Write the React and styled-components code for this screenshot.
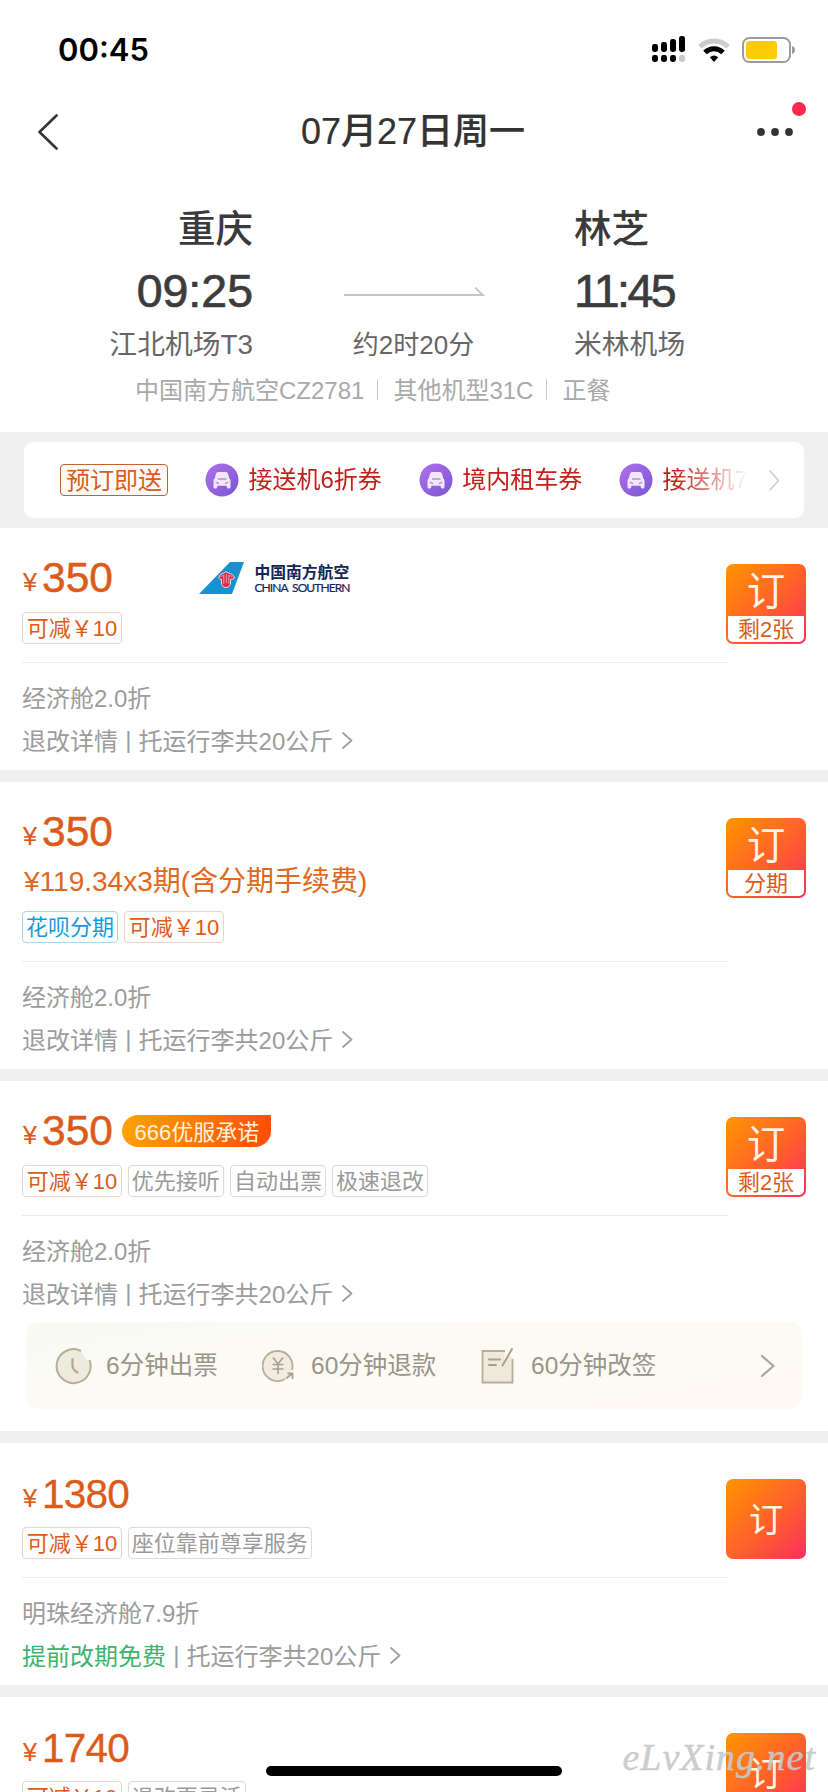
import React from 'react';
import styled, { createGlobalStyle, css } from 'styled-components';

const GlobalStyle = createGlobalStyle`
  * { box-sizing: border-box; }
  body {
    margin: 0;
    background: #fff;
    font-family: "Liberation Sans", "Noto Sans CJK SC", sans-serif;
  }
`;

const orange = '#dc5b1a';

const Screen = styled.div`
  position: relative;
  width: 828px;
  height: 1792px;
  overflow: hidden;
  background: #fff;
  display: flex;
  flex-direction: column;
`;

/* ---------- status bar and title ---------- */
const StatusBar = styled.div`
  flex: none;
  height: 98px;
  padding: 1px 32px 0 57px;
  display: flex;
  align-items: center;
  justify-content: space-between;
`;
const Clock = styled.span`
  font-family: Inter, sans-serif;
  font-weight: 600;
  font-size: 31px;
  line-height: 40px;
  color: #000;
  padding: 1px 0 0 1px;
`;
const StatusIcons = styled.div`
  display: flex;
  gap: 12px;
  align-items: center;
  svg { display: block; }
`;
const NavBar = styled.header`
  flex: none;
  height: 68px;
  padding: 0 33px 0 38px;
  display: grid;
  grid-template-columns: 60px 1fr 60px;
  align-items: center;
  svg { display: block; }
`;
const Title = styled.h1`
  margin: 0;
  padding-right: 7px;
  text-align: center;
  font-size: 36px;
  font-weight: 500;
  line-height: 50px;
  color: #333;
  -webkit-text-stroke: 0.2px;
`;
const MoreButton = styled.div`
  position: relative;
  justify-self: end;
`;
const Dot = styled.i`
  position: absolute;
  right: -11px;
  top: -26px;
  width: 14px;
  height: 14px;
  border-radius: 50%;
  background: #fb2a4e;
`;

/* ---------- flight summary ---------- */
const Summary = styled.section`
  flex: none;
  height: 266px;
  padding-top: 38px;
`;
const Legs = styled.div`
  display: grid;
  grid-template-columns: 253px 321px 254px;
`;
const Leg = styled.div`
  text-align: ${(p) => p.$align};
`;
const City = styled.div`
  font-size: 37.5px;
  font-weight: 500;
  line-height: 50px;
  color: #3a3a3a;
`;
const Time = styled.div`
  font-size: 46.5px;
  line-height: 60px;
  margin-top: 7px;
  color: #3c3c3c;
  letter-spacing: ${(p) => p.$spacing || '0'};
  -webkit-text-stroke: 0.7px;
`;
const Airport = styled.div`
  font-size: 27.8px;
  line-height: 40px;
  margin-top: 4px;
  color: #666;
`;
const Duration = styled.div`
  display: flex;
  flex-direction: column;
  align-items: center;
  padding-top: 83px;
  font-size: 26px;
  line-height: 40px;
  color: #666;
  svg { display: block; margin-bottom: 28px; }
`;
const FlightInfo = styled.div`
  display: flex;
  align-items: center;
  margin: 4px 0 0 135px;
  font-size: 24px;
  line-height: 44px;
  color: #a9a9a9;
  span + span {
    display: flex;
    align-items: center;
  }
  span + span::before {
    content: '';
    width: 1px;
    height: 21px;
    margin: -4px 15px 0 13px;
    background: #ccc;
  }
`;

/* ---------- promotions ---------- */
const PromoBand = styled.section`
  flex: none;
  height: 96px;
  padding: 10px 24px;
  background: #f0f0f0;
`;
const PromoCard = styled.div`
  height: 76px;
  padding: 0 24px 0 36px;
  border-radius: 9px;
  background: #fff;
  display: flex;
  align-items: center;
  justify-content: space-between;
  svg { display: block; flex: none; }
`;
const PromoScroller = styled.div`
  width: 690px;
  overflow: hidden;
  display: flex;
  align-items: center;
  white-space: nowrap;
  mask-image: linear-gradient(90deg, #000 615px, transparent 688px);
`;
const PromoTag = styled.span`
  flex: none;
  width: 108px;
  height: 32px;
  margin-right: 37px;
  border: 1px solid #bd6430;
  border-radius: 4px;
  background: #fffbf8;
  text-align: center;
  font-size: 24px;
  line-height: 32px;
  color: ${orange};
`;
const Coupon = styled.span`
  flex: none;
  display: flex;
  align-items: center;
  gap: 9.5px;
  margin-right: 36.8px;
  font-size: 24px;
  line-height: 34px;
  color: #c4201a;
`;

/* ---------- fare cards ---------- */
const Fare = styled.article`
  flex: none;
  height: ${(p) => p.$height}px;
  padding: 25px 22px 0;
  border-bottom: 12px solid #f0f0f0;
`;
const FareTop = styled.div`
  display: flex;
  justify-content: space-between;
`;
const FareMain = styled.div`
  width: 706px;
  padding-bottom: 18px;
  border-bottom: 1px solid #ececec;
`;
const PriceRow = styled.div`
  display: flex;
  align-items: center;
  height: 50px;
`;
const Price = styled.span`
  display: flex;
  align-items: center;
  font-size: ${(p) => (p.$light ? 40.5 : 42.5)}px;
  letter-spacing: ${(p) => (p.$light ? '-0.8px' : '0')};
  line-height: 50px;
  padding-top: ${(p) => (p.$light ? 2 : 0)}px;
  color: ${orange};
  -webkit-text-stroke: ${(p) => (p.$light ? '0.3px' : '0.5px')};
`;
const Currency = styled.small`
  width: 20px;
  padding: 8px 0 0 1px;
  font-size: 25px;
  line-height: 26px;
  letter-spacing: 0;
  -webkit-text-stroke: 0.2px;
`;
const Badge = styled.span`
  width: 149px;
  height: 32px;
  margin-left: 9px;
  padding-left: 1px;
  border-radius: 16px 1px 16px 16px;
  background: linear-gradient(100deg, #ffa405, #ff4b08);
  text-align: center;
  font-size: 22px;
  line-height: 35px;
  color: #fff2dc;
`;
const Airline = styled.span`
  display: flex;
  align-items: center;
  gap: 10px;
  margin-left: 86.5px;
  svg { display: block; }
`;
const AirlineName = styled.span`
  display: flex;
  flex-direction: column;
  padding-top: 1px;
  color: #142557;
  b { font-size: 15.8px; line-height: 18px; }
  small {
    font-family: Lato, sans-serif;
    font-size: 12px;
    line-height: 12px;
    letter-spacing: -0.9px;
    word-spacing: 2.5px;
    white-space: nowrap;
    -webkit-text-stroke: 0.2px;
  }
`;
const Installment = styled.div`
  height: 40px;
  margin: 4px 0 10px;
  font-size: 28px;
  line-height: 42px;
  padding-left: 2px;
  color: #e0681c;
`;
const Tags = styled.div`
  display: flex;
  gap: 6px;
  margin-top: ${(p) => (p.$flush ? 0 : 9)}px;
`;
const tones = {
  orange: css`color: ${orange}; border-color: #f5cfcd; padding: 0 3.7px;`,
  blue: css`color: #149bdb; border-color: #a5d8f1;`,
  gray: css`color: #9a9a9a; border-color: #dadada;`,
};
const Tag = styled.span`
  height: 32px;
  padding: 0 3px;
  border: 1px solid;
  border-radius: 4px;
  font-size: 22px;
  line-height: 31px;
  white-space: nowrap;
  ${(p) => tones[p.$tone]}
`;
const BookButton = styled.button`
  flex: none;
  width: 80px;
  height: 80px;
  margin: 11px 0 0 -2px;
  padding: 0 2px 2px;
  border: 0;
  border-radius: 7px;
  background: linear-gradient(135deg, #ff9500, #ff6428 50%, #fd2e5c);
  display: flex;
  flex-direction: column;
  font-family: inherit;
  color: #fff3e6;
`;
const BookLabel = styled.span`
  flex: 1;
  align-self: stretch;
  display: flex;
  align-items: center;
  justify-content: center;
  padding-top: 4px;
  font-size: ${(p) => (p.$large ? 34.5 : 38.5)}px;
  line-height: 1;
`;
const BookNote = styled.span`
  align-self: stretch;
  height: 26px;
  border-radius: 0 0 5px 5px;
  background: #fff;
  font-size: 22px;
  line-height: 27px;
  color: ${orange};
`;
const Detail = styled.div`
  display: flex;
  align-items: center;
  height: 43px;
  font-size: 24px;
  color: #9c9c9c;
  white-space: pre;
  svg { margin: 2px 0 0 9px; }
`;
const Details = styled.div`
  padding-top: 12px;
`;
const Green = styled.span`
  color: #3cb46e;
`;
const Bar = styled.span`
  margin: 0 0.5px;
`;
const ServiceStrip = styled.div`
  display: flex;
  align-items: center;
  width: 776px;
  height: 87px;
  margin: 8px 0 0 4px;
  padding: 0 27px 0 28px;
  border-radius: 12px;
  background: linear-gradient(170deg, #f9faf5, #fdfaf3 50%, #fefaf3);
  svg { flex: none; }
`;
const Service = styled.span`
  display: flex;
  align-items: center;
  width: ${(p) => p.$width}px;
  gap: ${(p) => p.$gap}px;
  font-size: 24.5px;
  line-height: 34px;
  color: #99958a;
  white-space: nowrap;
`;
const Spacer = styled.i`
  flex: 1;
`;

/* ---------- overlays ---------- */
const HomeIndicator = styled.div`
  position: absolute;
  left: 266px;
  bottom: 16px;
  width: 296px;
  height: 10px;
  border-radius: 5px;
  background: #000;
`;
const Watermark = styled.div`
  position: absolute;
  right: 12px;
  bottom: 13px;
  font-family: "Liberation Serif", cursive;
  font-style: italic;
  font-size: 38px;
  line-height: 44px;
  letter-spacing: 1px;
  color: rgba(200, 200, 200, 0.92);
  -webkit-text-stroke: 0.5px;
`;

const Chevron = ({ w, h, color, stroke = 2, flip }) => (
  <svg width={w} height={h} viewBox={`0 0 ${w} ${h}`} fill="none">
    <path
      d={flip ? `M${w - 1.5} 1.5 L1.5 ${h / 2} L${w - 1.5} ${h - 1.5}` : `M1 1 L${w - 1.5} ${h / 2} L1 ${h - 1}`}
      stroke={color}
      strokeWidth={stroke}
      strokeLinecap="round"
      strokeLinejoin="round"
    />
  </svg>
);

const Signal = () => (
  <svg width="34" height="27" viewBox="0 0 34 27">
    {[[0, 8], [9, 6], [18, 3], [27, 0]].map(([x, y], i) => (
      <g key={x}>
        <rect x={x} y={y} width="6" height={16 - y} rx="2.4" fill="#000" />
        <rect x={x} y="19" width="6" height="7" rx="2.4" fill={i === 3 ? '#c8c8c8' : '#000'} />
      </g>
    ))}
  </svg>
);

const Wifi = () => (
  <svg width="32" height="24" viewBox="0 0 32 24" fill="none">
    <path d="M2 8.8 A20 20 0 0 1 30 8.8" stroke="#ccc" strokeWidth="5" />
    <path d="M7 14.6 A12.6 12.6 0 0 1 25 14.6" stroke="#000" strokeWidth="5" />
    <path d="M11.8 19.2 A6.5 6.5 0 0 1 20.2 19.2 L16 24 Z" fill="#000" />
  </svg>
);

const Battery = () => (
  <svg width="54" height="26" viewBox="0 0 54 26">
    <rect x="1" y="1" width="47" height="24" rx="6.5" fill="#fff" stroke="#9c9c98" strokeWidth="2" />
    <rect x="4" y="4" width="31" height="18" rx="3.5" fill="#fdcb08" />
    <path d="M50 9 Q53 10.2 53 13 T50 17 Z" fill="#999" />
  </svg>
);

const CarIcon = () => (
  <svg width="34" height="34" viewBox="0 0 34 34">
    <defs>
      <linearGradient id="car" x1="0" y1="0" x2="1" y2="1">
        <stop offset="0" stopColor="#b070ee" />
        <stop offset="1" stopColor="#7857d2" />
      </linearGradient>
    </defs>
    <circle cx="17" cy="17" r="16.5" fill="url(#car)" />
    <path d="M13 9 h8 q1.4 0 1.9 1.5 l1.4 4.8 q1.2 1 1.2 2.8 v6 q0 1.5 -1.5 1.5 h-.6 q-1.4 0 -1.6 -1.5 l-.3 -1.4 h-9 l-.3 1.4 q-.2 1.5 -1.6 1.5 h-.6 q-1.5 0 -1.5 -1.5 v-6 q0 -1.8 1.2 -2.8 l1.4 -4.8 q.5 -1.5 1.9 -1.5z" fill="#f1e6fd" />
    <path d="M13 16 h8.5" stroke="#a596ae" strokeWidth="1.4" />
    <path d="M11.2 19.4 l2.4 1 M22.8 19.4 l-2.4 1" stroke="#b08ae4" strokeWidth="1.3" strokeLinecap="round" />
  </svg>
);

const TailLogo = () => (
  <svg width="45" height="32" viewBox="0 0 45 32">
    <path d="M31 0 H45 L33 32 H0 Z" fill="#1791cf" />
    <path d="M19.5 16 q1 -4.5 5.5 -5 l2 -1.5 2 1.5 q5.5 .5 6.5 5 q-1.5 1.5 -4 1.2 v5 q-1.5 3.5 -4.5 3.5 t-4.5 -3.5 v-5 q-2 .3 -3 -1.2z" fill="#d62b4b" stroke="#eed3dd" strokeWidth="1" />
    <path d="M24.8 13 v9 M27.3 12 v9 M29.8 13 v9 M21.5 14.6 q2 -1.5 3 -.5 M33.5 14.6 q-2 -1.5 -3.5 -.5" stroke="#f2b5c0" strokeWidth="0.8" fill="none" />
  </svg>
);

const ClockIcon = () => (
  <svg width="38" height="38" viewBox="0 0 38 38" fill="none">
    <path d="M27.5 4 A17 17 0 1 0 35.5 14 Q30 12 27.5 4Z" fill="#edebdd" />
    <path d="M27 3.8 A17 17 0 1 0 35.5 13" stroke="#b5af98" strokeWidth="2" />
    <path d="M18.5 12 V19 Q19 23 23.5 25.5" stroke="#b0aa93" strokeWidth="2.2" strokeLinecap="round" />
  </svg>
);

const RefundIcon = () => (
  <svg width="33" height="34" viewBox="0 0 33 34" fill="none">
    <circle cx="16" cy="16.5" r="15" fill="#f0ecdf" />
    <path d="M30 21 A15 15 0 1 0 23 30" stroke="#b5af98" strokeWidth="1.8" />
    <path d="M24 29.5 L30 25 M25.5 24.5 H30.5 V30" stroke="#aaa48c" strokeWidth="1.8" />
    <path d="M11 8.5 L16 15 L21 8.5 M16 15 V25 M10.5 15.5 H21.5 M10.5 20 H21.5" stroke="#a7a08a" strokeWidth="1.6" />
  </svg>
);

const ChangeIcon = () => (
  <svg width="34" height="36" viewBox="0 0 34 36" fill="none">
    <path d="M24 3 H1.5 V34.5 H31.5 V11 L29 7 L23 17Z" fill="#edeadc" />
    <path d="M24 3 H1.5 V34.5 H31.5 V11" stroke="#b5af98" strokeWidth="1.8" />
    <path d="M31 1 L21.5 17.5 M8 11.5 H19 M8 17 H15" stroke="#a7a08a" strokeWidth="2" strokeLinecap="round" />
  </svg>
);

const fares = [
  { price: '350', height: 254, airline: true, note: '剩2张', tags: [['orange', '可减￥10']], cabin: '经济舱2.0折' },
  {
    price: '350', height: 299, note: '分期', installment: '¥119.34x3期(含分期手续费)',
    tags: [['blue', '花呗分期'], ['orange', '可减￥10']], cabin: '经济舱2.0折',
  },
  {
    price: '350', height: 362, badge: '666优服承诺', note: '剩2张', services: true,
    tags: [['orange', '可减￥10'], ['gray', '优先接听'], ['gray', '自动出票'], ['gray', '极速退改']],
    cabin: '经济舱2.0折',
  },
  {
    price: '1380', light: true, height: 254, tags: [['orange', '可减￥10'], ['gray', '座位靠前尊享服务']],
    cabin: '明珠经济舱7.9折', green: '提前改期免费',
  },
  {
    price: '1740', light: true, height: 254, tags: [['orange', '可减￥10'], ['gray', '退改更灵活']],
  },
];

function FareCard({ fare }) {
  return (
    <Fare $height={fare.height}>
      <FareTop>
        <FareMain>
          <PriceRow>
            <Price $light={fare.light}><Currency>¥</Currency>{fare.price}</Price>
            {fare.badge && <Badge>{fare.badge}</Badge>}
            {fare.airline && (
              <Airline>
                <TailLogo />
                <AirlineName><b>中国南方航空</b><small>CHINA SOUTHERN</small></AirlineName>
              </Airline>
            )}
          </PriceRow>
          {fare.installment && <Installment>{fare.installment}</Installment>}
          <Tags $flush={!!fare.installment}>
            {fare.tags.map(([tone, label]) => <Tag key={label} $tone={tone}>{label}</Tag>)}
          </Tags>
        </FareMain>
        <BookButton>
          <BookLabel $large={!fare.note}>订</BookLabel>
          {fare.note && <BookNote>{fare.note}</BookNote>}
        </BookButton>
      </FareTop>
      {fare.cabin && (
        <Details>
          <Detail>{fare.cabin}</Detail>
          <Detail>
            {fare.green ? <Green>{fare.green}</Green> : '退改详情'}
            <Bar>{' | '}</Bar>
            托运行李共20公斤
            <Chevron w={11} h={17} color="#a0a0a0" stroke={1.8} />
          </Detail>
        </Details>
      )}
      {fare.services && (
        <ServiceStrip>
          <Service $width={208} $gap={14}><ClockIcon />6分钟出票</Service>
          <Service $width={219} $gap={16}><RefundIcon />60分钟退款</Service>
          <Service $width={180} $gap={16}><ChangeIcon />60分钟改签</Service>
          <Spacer />
          <Chevron w={14} h={22} color="#a8a59b" stroke={2.2} />
        </ServiceStrip>
      )}
    </Fare>
  );
}

export default function App() {
  return (
    <Screen>
      <GlobalStyle />
      <StatusBar>
        <Clock>00:45</Clock>
        <StatusIcons><Signal /><Wifi /><Battery /></StatusIcons>
      </StatusBar>
      <NavBar>
        <Chevron w={20} h={36} color="#333" stroke={2.6} flip />
        <Title>07月27日周一</Title>
        <MoreButton>
          <svg width="38" height="8" viewBox="0 0 38 8" fill="#333">
            <circle cx="4" cy="4" r="3.9" /><circle cx="18" cy="4" r="3.9" /><circle cx="32" cy="4" r="3.9" />
          </svg>
          <Dot />
        </MoreButton>
      </NavBar>
      <Summary>
        <Legs>
          <Leg $align="right">
            <City>重庆</City>
            <Time>09:25</Time>
            <Airport>江北机场T3</Airport>
          </Leg>
          <Duration>
            <svg width="142" height="10" viewBox="0 0 142 10" fill="none">
              <path d="M1 8 H140 L132 0.5" stroke="#c6c6c6" strokeWidth="1.8" />
            </svg>
            约2时20分
          </Duration>
          <Leg $align="left">
            <City>林芝</City>
            <Time $spacing="-2.6px">11:45</Time>
            <Airport>米林机场</Airport>
          </Leg>
        </Legs>
        <FlightInfo><span>中国南方航空CZ2781</span><span>其他机型31C</span><span>正餐</span></FlightInfo>
      </Summary>
      <PromoBand>
        <PromoCard>
          <PromoScroller>
            <PromoTag>预订即送</PromoTag>
            <Coupon><CarIcon />接送机6折券</Coupon>
            <Coupon><CarIcon />境内租车券</Coupon>
            <Coupon><CarIcon />接送机7</Coupon>
          </PromoScroller>
          <Chevron w={11} h={21} color="#ccc" stroke={1.6} />
        </PromoCard>
      </PromoBand>
      {fares.map((fare) => <FareCard key={fare.price + fare.height} fare={fare} />)}
      <HomeIndicator />
      <Watermark>eLvXing.net</Watermark>
    </Screen>
  );
}
